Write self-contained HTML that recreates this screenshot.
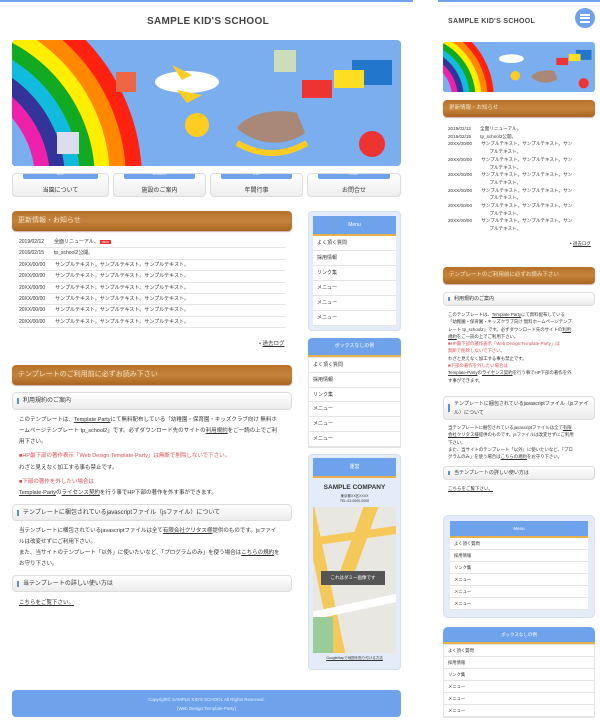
<!DOCTYPE html>
<html><head><meta charset="utf-8"><style>
*{margin:0;padding:0;box-sizing:border-box}
body{width:600px;height:724px;background:#fff;font-family:"Liberation Sans","Noto Sans CJK JP",sans-serif;color:#333;position:relative;overflow:hidden}
.a{position:absolute}
.t{position:absolute;font-size:5.5px;white-space:nowrap;color:#333}
.logo{font-weight:bold;color:#444;letter-spacing:.3px}
.brown{background:linear-gradient(#b5712a,#c4843c,#a9651f);border-radius:4px;color:#f4e2c4;font-size:7px;padding-left:6px;box-shadow:0 1px 1px #caa}
.h3{background:linear-gradient(#fff,#ececec);border:1px solid #ddd;border-radius:4px;font-size:6px;padding-left:10px;color:#333}
.h3:before{content:"";position:absolute;left:4px;top:30%;height:40%;width:1.5px;background:#5a8fe0}
.nav{background:linear-gradient(#fff,#eee);border:1px solid #ddd;border-radius:4px;font-size:6px;text-align:center}
.nav i{display:block;margin:0 10px;height:5px;background:#6ea2ea;border-radius:0 0 2px 2px;font-size:2px;color:#fff;font-style:normal}
.hd{background:#6ea2ea;border-bottom:2px solid #e6b04a;color:#fff;font-size:5px;text-align:center}
.li{border-bottom:1px solid #e4e4e4;background:#fff;font-size:5px;padding-left:4px}
.u{text-decoration:underline}
.red{color:#e05050}
</style></head><body>
<div class="a" style="left:0;top:0;width:413px;height:2px;background:#6ea2ea"></div>
<div class="a" style="left:438px;top:0;width:162px;height:2px;background:#6ea2ea"></div>
<div class="t logo" style="left:147px;top:16px;font-size:10px">SAMPLE KID'S SCHOOL</div>
<div class="t logo" style="left:448px;top:18px;font-size:7px">SAMPLE KID'S SCHOOL</div>
<div class="a" style="left:575px;top:8px;width:20px;height:20px;border-radius:50%;background:#6ea2ea"><div class="a" style="left:5px;top:5.5px;width:10px;height:9px;border-top:2px solid #fff;border-bottom:2px solid #fff"></div><div class="a" style="left:5px;top:9px;width:10px;height:2px;background:#fff"></div></div>

<svg class="a" style="left:12px;top:40px" width="389" height="126" viewBox="0 0 389 126">
<defs><clipPath id="c"><rect width="389" height="126" rx="4"/></clipPath></defs>
<g clip-path="url(#c)"><rect width="389" height="126" fill="#7aaeee"/>
<circle cx="-72" cy="140" r="202" fill="#f21"/><circle cx="-72" cy="140" r="186" fill="#f80"/><circle cx="-72" cy="140" r="170" fill="#fe0"/><circle cx="-72" cy="140" r="155" fill="#1a2"/><circle cx="-72" cy="140" r="140" fill="#1bd"/><circle cx="-72" cy="140" r="125" fill="#339"/><circle cx="-72" cy="140" r="110" fill="#e2a"/><circle cx="-72" cy="140" r="95" fill="#7aaeee"/>
<ellipse cx="175" cy="42" rx="32" ry="11" fill="#fff"/><path d="M160 25l20 10-10 5zM165 50l25 5-15 8z" fill="#fc2"/>
<rect x="340" y="20" width="40" height="25" fill="#27c"/><rect x="322" y="30" width="30" height="18" fill="#fd2"/><rect x="290" y="40" width="30" height="18" fill="#e33"/>
<path d="M225 88c10-15 40-20 60-15l8 20c-20 15-50 12-68-5z" fill="#a87"/><path d="M225 103q35 20 70 0" stroke="#fc2" stroke-width="6" fill="none"/>
<circle cx="185" cy="85" r="12" fill="#fc2"/><circle cx="360" cy="104" r="13" fill="#e33"/>
<rect x="104" y="32" width="20" height="20" fill="#e64"/><rect x="262" y="10" width="22" height="22" fill="#cdb"/><rect x="45" y="92" width="22" height="22" fill="#dde"/></g></svg>
<svg class="a" style="left:443px;top:42px" width="152" height="50" viewBox="0 0 389 126" preserveAspectRatio="none">
<defs><clipPath id="d"><rect width="389" height="126" rx="8"/></clipPath></defs>
<g clip-path="url(#d)"><rect width="389" height="126" fill="#7aaeee"/>
<circle cx="-72" cy="140" r="202" fill="#f21"/><circle cx="-72" cy="140" r="186" fill="#f80"/><circle cx="-72" cy="140" r="170" fill="#fe0"/><circle cx="-72" cy="140" r="155" fill="#1a2"/><circle cx="-72" cy="140" r="140" fill="#1bd"/><circle cx="-72" cy="140" r="125" fill="#339"/><circle cx="-72" cy="140" r="110" fill="#e2a"/><circle cx="-72" cy="140" r="95" fill="#7aaeee"/>
<ellipse cx="175" cy="42" rx="32" ry="11" fill="#fff"/><rect x="340" y="20" width="40" height="25" fill="#27c"/><rect x="322" y="30" width="30" height="18" fill="#fd2"/><rect x="290" y="40" width="30" height="18" fill="#e33"/>
<path d="M225 88c10-15 40-20 60-15l8 20c-20 15-50 12-68-5z" fill="#a87"/><circle cx="185" cy="85" r="12" fill="#fc2"/><circle cx="360" cy="104" r="13" fill="#e33"/></g></svg>

<div class="a nav" style="left:12px;top:173px;width:97px;height:24px"><i>ABOUT</i><div style="margin-top:6px">当園について</div></div>
<div class="a nav" style="left:113px;top:173px;width:93px;height:24px"><i>INFORMATION</i><div style="margin-top:6px">施設のご案内</div></div>
<div class="a nav" style="left:210px;top:173px;width:93px;height:24px"><i>EVENT</i><div style="margin-top:6px">年間行事</div></div>
<div class="a nav" style="left:307px;top:173px;width:94px;height:24px"><i>CONTACT</i><div style="margin-top:6px">お問合せ</div></div>

<div class="a brown" style="left:12px;top:211px;width:280px;height:20px;line-height:20px">更新情報・お知らせ</div>
<div class="a" style="left:19px;top:237px;width:266px">
<div class="li" style="background:none;height:11.4px;line-height:11px;padding:0">2019/02/12　　全面リニューアル。 <span style="background:#e33;color:#fff;font-size:3px;padding:0 2px">NEW</span></div>
<div class="li" style="background:none;height:11.4px;line-height:11px;padding:0">2016/02/15　　tp_school2公開。</div>
<div class="li" style="background:none;height:11.4px;line-height:11px;padding:0">20XX/00/00　　サンプルテキスト。サンプルテキスト。サンプルテキスト。</div>
<div class="li" style="background:none;height:11.4px;line-height:11px;padding:0">20XX/00/00　　サンプルテキスト。サンプルテキスト。サンプルテキスト。</div>
<div class="li" style="background:none;height:11.4px;line-height:11px;padding:0">20XX/00/00　　サンプルテキスト。サンプルテキスト。サンプルテキスト。</div>
<div class="li" style="background:none;height:11.4px;line-height:11px;padding:0">20XX/00/00　　サンプルテキスト。サンプルテキスト。サンプルテキスト。</div>
<div class="li" style="background:none;height:11.4px;line-height:11px;padding:0">20XX/00/00　　サンプルテキスト。サンプルテキスト。サンプルテキスト。</div>
<div class="li" style="background:none;height:11.4px;line-height:11px;padding:0">20XX/00/00　　サンプルテキスト。サンプルテキスト。サンプルテキスト。</div>
</div>
<div class="t" style="left:259px;top:339px">• <span class="u">過去ログ</span></div>

<div class="a brown" style="left:12px;top:365px;width:280px;height:20px;line-height:20px">テンプレートのご利用前に必ずお読み下さい</div>
<div class="a h3" style="left:12px;top:392px;width:280px;height:18px;line-height:17px">利用規約のご案内</div>
<div class="t" style="left:19px;top:415px;line-height:11px">このテンプレートは、<span class="u">Template Party</span>にて無料配布している「幼稚園・保育園・キッズクラブ向け 無料ホ<br>ームページテンプレート tp_school2」です。必ずダウンロード先のサイトの<span class="u">利用規約</span>をご一読の上でご利<br>用下さい。</div>
<div class="t red" style="left:19px;top:451px">■HP最下部の著作表示「Web Design:Template-Party」は無断で削除しないで下さい。</div>
<div class="t" style="left:19px;top:463px">わざと見えなく加工する事も禁止です。</div>
<div class="t red" style="left:19px;top:477px">■下部の著作を外したい場合は</div>
<div class="t" style="left:19px;top:488px"><span class="u">Template-Party</span>の<span class="u">ライセンス契約</span>を行う事でHP下部の著作を外す事ができます。</div>
<div class="a h3" style="left:12px;top:504px;width:280px;height:17px;line-height:16px">テンプレートに梱包されているjavascriptファイル（jsファイル）について</div>
<div class="t" style="left:19px;top:526px;line-height:11px">当テンプレートに梱包されているjavascriptファイルは全て<span class="u">有限会社クリタス様</span>提供のものです。jsファイ<br>ルは改変せずにご利用下さい。<br>また、当サイトのテンプレート「以外」に使いたいなど、「プログラムのみ」を使う場合は<span class="u">こちらの規約</span>を<br>お守り下さい。</div>
<div class="a h3" style="left:12px;top:575px;width:280px;height:17px;line-height:16px">当テンプレートの詳しい使い方は</div>
<div class="t u" style="left:19px;top:598px">こちらをご覧下さい。</div>

<div class="a" style="left:308px;top:211px;width:93px;height:120px;background:#e3ecf8;border:1px solid #d4e0f0;border-radius:4px"></div>
<div class="a hd" style="left:313px;top:216px;width:83px;height:20px;line-height:18px">Menu</div>
<div class="a" style="left:313px;top:236px;width:83px">
<div class="li" style="height:15px;line-height:14px">よく頂く質問</div><div class="li" style="height:15px;line-height:14px">採用情報</div><div class="li" style="height:15px;line-height:14px">リンク集</div><div class="li" style="height:15px;line-height:14px">メニュー</div><div class="li" style="height:15px;line-height:14px">メニュー</div><div class="li" style="height:15px;line-height:14px">メニュー</div></div>
<div class="a hd" style="left:308px;top:338px;width:93px;height:19px;line-height:17px;border-radius:4px 4px 0 0">ボックスなしの例</div>
<div class="a" style="left:308px;top:357px;width:93px;border:1px solid #e4e4e4">
<div class="li" style="height:14.8px;line-height:14px">よく頂く質問</div><div class="li" style="height:14.8px;line-height:14px">採用情報</div><div class="li" style="height:14.8px;line-height:14px">リンク集</div><div class="li" style="height:14.8px;line-height:14px">メニュー</div><div class="li" style="height:14.8px;line-height:14px">メニュー</div><div class="li" style="height:14.8px;line-height:14px">メニュー</div></div>
<div class="a" style="left:308px;top:454px;width:93px;height:216px;background:#e3ecf8;border:1px solid #d4e0f0;border-radius:4px"></div>
<div class="a hd" style="left:313px;top:458px;width:83px;height:20px;line-height:18px">運営</div>
<div class="t" style="left:313px;width:83px;text-align:center;top:484px;font-size:6.5px;font-weight:bold">SAMPLE COMPANY</div>
<div class="t" style="left:313px;width:83px;text-align:center;top:494px;font-size:3.5px;line-height:5px">東京都XX区XXXX<br>TEL:03-0000-0000</div>
<div class="a" style="left:313px;top:507px;width:83px;height:146px;background:#e9e7e2;overflow:hidden">
<div class="a" style="left:5px;top:-10px;width:12px;height:170px;background:#f5c85a;transform:rotate(-12deg)"></div>
<div class="a" style="left:40px;top:-10px;width:14px;height:80px;background:#f5c85a;transform:rotate(20deg)"></div>
<div class="a" style="left:-10px;top:25px;width:100px;height:8px;background:#f5c85a;transform:rotate(-8deg)"></div>
<div class="a" style="left:-10px;top:95px;width:110px;height:8px;background:#fff;transform:rotate(-12deg)"></div>
<div class="a" style="left:0;top:110px;width:20px;height:40px;background:#9c9"></div>
<div class="a" style="left:8px;top:64px;width:64px;height:14px;background:#555;color:#fff;font-size:4.5px;line-height:14px;text-align:center">これはダミー画像です</div></div>
<div class="t u" style="left:313px;width:83px;text-align:center;top:656px;font-size:3.5px">GoogleMapで地図を貼り付ける方法</div>

<div class="a" style="left:12px;top:690px;width:389px;height:27px;background:#6ea2ea;border-radius:4px;color:#e8f0ff;font-size:4.5px;text-align:center;line-height:9px;padding-top:5px">Copyright© SAMPLE KID'S SCHOOL All Rights Reserved.<br>[Web Design:Template-Party]</div>

<!-- mobile -->
<div class="a brown" style="left:443px;top:100px;width:152px;height:17px;line-height:17px;font-size:5.5px">更新情報・お知らせ</div>
<div class="t" style="left:448px;top:125px;font-size:4.6px;line-height:7.7px">2019/02/12　　全面リニューアル。<br>2016/02/15　　tp_school2公開。<br>20XX/00/00　　サンプルテキスト。サンプルテキスト。サン<br>　　　　　　　　　プルテキスト。<br>20XX/00/00　　サンプルテキスト。サンプルテキスト。サン<br>　　　　　　　　　プルテキスト。<br>20XX/00/00　　サンプルテキスト。サンプルテキスト。サン<br>　　　　　　　　　プルテキスト。<br>20XX/00/00　　サンプルテキスト。サンプルテキスト。サン<br>　　　　　　　　　プルテキスト。<br>20XX/00/00　　サンプルテキスト。サンプルテキスト。サン<br>　　　　　　　　　プルテキスト。<br>20XX/00/00　　サンプルテキスト。サンプルテキスト。サン<br>　　　　　　　　　プルテキスト。</div>
<div class="t" style="left:570px;top:241px;font-size:4.5px">• <span class="u">過去ログ</span></div>
<div class="a brown" style="left:443px;top:267px;width:152px;height:17px;line-height:17px;font-size:5.5px">テンプレートのご利用前に必ずお読み下さい</div>
<div class="a h3" style="left:443px;top:292px;width:152px;height:14px;line-height:13px;font-size:5px">利用規約のご案内</div>
<div class="t" style="left:448px;top:311px;font-size:4.4px;line-height:7.3px">このテンプレートは、<span class="u">Template Party</span>にて無料配布している<br>「幼稚園・保育園・キッズクラブ向け 無料ホームページテンプ<br>レート tp_school2」です。必ずダウンロード先のサイトの<span class="u">利用</span><br><span class="u">規約</span>をご一読の上でご利用下さい。<br><span class="red">■HP最下部の著作表示「Web Design:Template-Party」は<br>無断で削除しないで下さい。</span><br>わざと見えなく加工する事も禁止です。<br><span class="red">■下部の著作を外したい場合は</span><br><span class="u">Template-Party</span>の<span class="u">ライセンス契約</span>を行う事でHP下部の著作を外<br>す事ができます。</div>
<div class="a h3" style="left:443px;top:396px;width:152px;height:24px;line-height:9px;font-size:5px;padding-top:3px;white-space:normal">テンプレートに梱包されているjavascriptファイル（jsファイル）について</div>
<div class="t" style="left:448px;top:424px;font-size:4.4px;line-height:7.3px">当テンプレートに梱包されているjavascriptファイルは全て<span class="u">有限</span><br><span class="u">会社クリタス様</span>提供のものです。jsファイルは改変せずにご利用<br>下さい。<br>また、当サイトのテンプレート「以外」に使いたいなど、「プロ<br>グラムのみ」を使う場合は<span class="u">こちらの規約</span>をお守り下さい。</div>
<div class="a h3" style="left:443px;top:466px;width:152px;height:14px;line-height:13px;font-size:5px">当テンプレートの詳しい使い方は</div>
<div class="t u" style="left:448px;top:486px;font-size:4.5px">こちらをご覧下さい。</div>

<div class="a" style="left:443px;top:515px;width:152px;height:103px;background:#e3ecf8;border:1px solid #d4e0f0;border-radius:5px"></div>
<div class="a hd" style="left:450px;top:521px;width:138px;height:17px;line-height:15px;font-size:4.5px">Menu</div>
<div class="a" style="left:450px;top:538px;width:138px">
<div class="li" style="height:12px;line-height:11px;font-size:4.3px">よく頂く質問</div><div class="li" style="height:12px;line-height:11px;font-size:4.3px">採用情報</div><div class="li" style="height:12px;line-height:11px;font-size:4.3px">リンク集</div><div class="li" style="height:12px;line-height:11px;font-size:4.3px">メニュー</div><div class="li" style="height:12px;line-height:11px;font-size:4.3px">メニュー</div><div class="li" style="height:12px;line-height:11px;font-size:4.3px">メニュー</div></div>
<div class="a hd" style="left:443px;top:627px;width:152px;height:17px;line-height:15px;font-size:4.5px;border-radius:5px 5px 0 0">ボックスなしの例</div>
<div class="a" style="left:443px;top:644px;width:152px;border:1px solid #e4e4e4">
<div class="li" style="height:12px;line-height:11px;font-size:4.3px">よく頂く質問</div><div class="li" style="height:12px;line-height:11px;font-size:4.3px">採用情報</div><div class="li" style="height:12px;line-height:11px;font-size:4.3px">リンク集</div><div class="li" style="height:12px;line-height:11px;font-size:4.3px">メニュー</div><div class="li" style="height:12px;line-height:11px;font-size:4.3px">メニュー</div><div class="li" style="height:12px;line-height:11px;font-size:4.3px">メニュー</div></div>
</body></html>
